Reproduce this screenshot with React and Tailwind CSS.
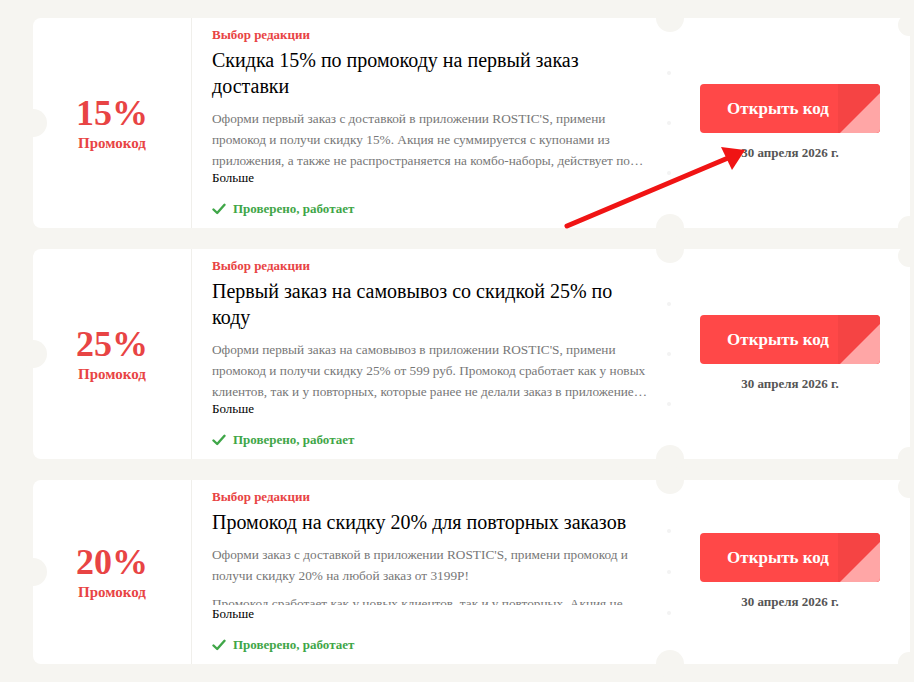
const serif = { fontFamily: '"Liberation Serif", "Times New Roman", serif' };

const coupons = [
  {
    value: "15%",
    title: "Скидка 15% по промокоду на первый заказ доставки",
    desc: [
      "Оформи первый заказ с доставкой в приложении ROSTIC'S, примени промокод и получи скидку 15%. Акция не суммируется с купонами из приложения, а также не распространяется на комбо-наборы, действует по всему меню.",
    ],
  },
  {
    value: "25%",
    title: "Первый заказ на самовывоз со скидкой 25% по коду",
    desc: [
      "Оформи первый заказ на самовывоз в приложении ROSTIC'S, примени промокод и получи скидку 25% от 599 руб. Промокод сработает как у новых клиентов, так и у повторных, которые ранее не делали заказ в приложение на самовывоз.",
    ],
  },
  {
    value: "20%",
    title: "Промокод на скидку 20% для повторных заказов",
    desc: [
      "Оформи заказ с доставкой в приложении ROSTIC'S, примени промокод и получи скидку 20% на любой заказ от 3199Р!",
      "Промокод сработает как у новых клиентов, так и у повторных. Акция не суммируется с купонами.",
    ],
  },
];

const Check = () => (
  <svg width="14" height="12" viewBox="0 0 14 12" fill="none">
    <path d="M1.5 6.5 L5.2 10 L12.5 1.8" stroke="#3fa648" strokeWidth="2.4" strokeLinecap="round" strokeLinejoin="round" />
  </svg>
);

const Coupon = ({ c }) => (
  <div className="relative flex bg-white rounded-lg">
    <div className="absolute left-[-14px] top-1/2 -translate-y-1/2 w-[28px] h-[28px] rounded-full bg-[#f6f5f1]" />
    <div className="absolute left-[623px] top-[-14px] w-[28px] h-[28px] rounded-full bg-[#f6f5f1]" />
    <div className="absolute left-[623px] bottom-[-14px] w-[28px] h-[28px] rounded-full bg-[#f6f5f1]" />
    <div className="absolute right-[-10px] top-[-4px] w-[22px] h-[22px] rounded-full bg-[#f6f5f1]" />
    <div className="absolute right-[-10px] bottom-[-10px] w-[22px] h-[22px] rounded-full bg-[#f6f5f1]" />

    <div className="w-[159px] shrink-0 border-r border-[#f0efeb] flex flex-col items-center justify-center">
      <div className="text-[36px] leading-[40px] font-bold text-[#e84444]">{c.value}</div>
      <div className="text-[15px] leading-[20px] font-bold text-[#e84444]">Промокод</div>
    </div>

    <div className="w-[478px] shrink-0 pl-[20px] pr-[20px] pt-[8px] pb-[10px]">
      <div className="text-[13px] leading-[18px] font-bold text-[#e84444]">Выбор редакции</div>
      <div className="mt-[3px] text-[20px] leading-[26px] text-black">{c.title}</div>
      <div className="mt-[9px] h-[61px] overflow-hidden text-[13.3px] leading-[21px] text-[#777]">
        {c.desc.length === 1 ? (
          <p className="line-clamp-3">{c.desc[0]}</p>
        ) : (
          c.desc.map((d, i) => (
            <p key={i} className="mb-[7px]">{d}</p>
          ))
        )}
      </div>
      <div className="text-[13px] leading-[18px] text-black">Больше</div>
      <div className="mt-[13px] flex items-center gap-[7px] text-[13px] leading-[18px] font-bold text-[#3fa648]">
        <Check />
        Проверено, работает
      </div>
    </div>

    <div className="relative flex-1 flex flex-col items-center justify-center">
      <div className="absolute left-[-3px] top-0 bottom-0 flex flex-col justify-around py-[30px]">
        <div className="w-[4px] h-[4px] rounded-full bg-[#f3f3f3]" />
        <div className="w-[4px] h-[4px] rounded-full bg-[#f3f3f3]" />
        <div className="w-[4px] h-[4px] rounded-full bg-[#f3f3f3]" />
      </div>
      <button className="relative w-[180px] h-[49px] rounded-[4px] bg-[#ff4848] overflow-hidden flex items-center">
        <span className="absolute right-0 top-0 w-[42px] h-[49px] bg-[#f54444]" />
        <svg className="absolute right-0 top-0" width="42" height="49" viewBox="0 0 42 49">
          <polygon points="42,9 42,49 2,49" fill="#ffa6a6" />
        </svg>
        <span className="relative w-[156px] text-center text-white text-[17px] font-bold" style={serif}>Открыть код</span>
      </button>
      <div className="mt-[11px] text-[13px] leading-[18px] font-bold text-[#555]">30 апреля 2026 г.</div>
    </div>
  </div>
);

const App = () => {
  return (
    <div className="relative w-[914px] h-[682px] overflow-hidden bg-[#f6f5f1]" style={serif}>
      <div className="pt-[18px] pl-[33px] w-[910px] flex flex-col gap-[21px]">
        {coupons.map((c, i) => (
          <Coupon key={i} c={c} />
        ))}
      </div>
      <svg className="absolute left-0 top-0 pointer-events-none" width="914" height="682">
        <line x1="567" y1="226" x2="728" y2="158" stroke="#f01414" strokeWidth="5" strokeLinecap="round" />
        <polygon points="745,150 721,147 732,170" fill="#f01414" />
      </svg>
    </div>
  );
};

export default App;
